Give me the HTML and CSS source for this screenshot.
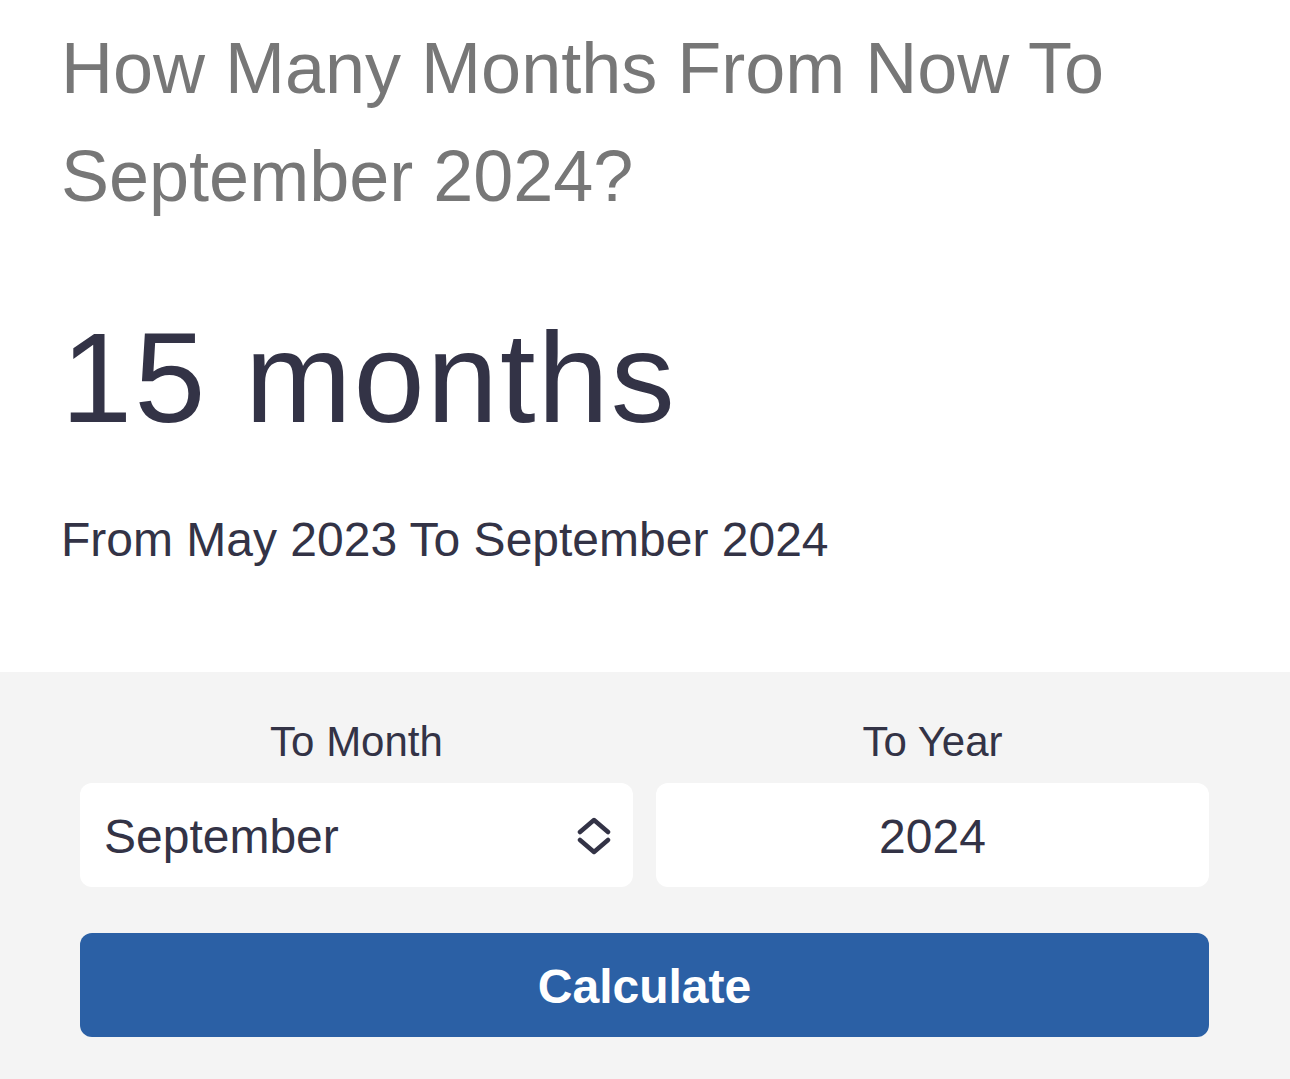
FILE: index.html
```
<!DOCTYPE html>
<html lang="en">
<head>
  <meta charset="UTF-8" />
  <meta name="viewport" content="width=device-width, initial-scale=1.0"/>
  <title>Months From Now To September 2024</title>
  <link rel="stylesheet" href="styles.css">
</head>
<body>
  <div class="result">
    <h1>How Many Months From Now To September 2024?</h1>
    <p class="answer">15 months</p>
    <p class="range">From May 2023 To September 2024</p>
  </div>

  <form class="calc" onsubmit="return false;">
    <div class="fields">
      <div class="field">
        <label for="toMonth">To Month</label>
        <div class="select-wrap">
          <select id="toMonth">
            <option>January</option>
            <option>February</option>
            <option>March</option>
            <option>April</option>
            <option>May</option>
            <option>June</option>
            <option>July</option>
            <option>August</option>
            <option selected>September</option>
            <option>October</option>
            <option>November</option>
            <option>December</option>
          </select>
          <svg class="chevrons" width="34" height="40" viewBox="0 0 34 40" fill="none" stroke="#333346" stroke-width="4.5" stroke-linecap="round" stroke-linejoin="round">
            <path d="M3 16 L17 4 L31 16"/>
            <path d="M3 24 L17 36 L31 24"/>
          </svg>
        </div>
      </div>
      <div class="field">
        <label for="toYear">To Year</label>
        <input id="toYear" type="text" value="2024">
      </div>
    </div>
    <button type="submit">Calculate</button>
  </form>
</body>
</html>
```

FILE: styles.css
```
* {
  margin: 0;
  padding: 0;
  box-sizing: border-box;
}

body {
  font-family: 'Liberation Sans', Arial, sans-serif;
  color: #333346;
  background: #fff;
}

.result {
  padding: 14px 56px 96px 61px;
}

h1 {
  font-size: 72px;
  font-weight: 400;
  line-height: 108px;
  color: #777;
}

.answer {
  margin-top: 71px;
  font-size: 128px;
  line-height: 1.2;
  letter-spacing: 2px;
}

.range {
  margin-top: 49px;
  font-size: 48px;
  line-height: 72px;
}

.calc {
  background: #f4f4f4;
  padding: 38px 81px 42px 80px;
}

.fields {
  display: grid;
  grid-template-columns: 1fr 1fr;
  gap: 23px;
}

.field label {
  display: block;
  text-align: center;
  font-size: 42px;
  line-height: 63px;
  margin-bottom: 10px;
}

.select-wrap {
  position: relative;
}

select,
input {
  display: block;
  width: 100%;
  height: 104px;
  border: none;
  border-radius: 12px;
  background: #fff;
  font-family: inherit;
  font-size: 48px;
  color: #333346;
  outline: none;
}

select {
  appearance: none;
  -webkit-appearance: none;
  padding: 4px 80px 0 24px;
}

input {
  text-align: center;
  padding: 4px 20px 0;
}

.chevrons {
  position: absolute;
  right: 22px;
  top: 33px;
  pointer-events: none;
}

button {
  display: block;
  width: 100%;
  height: 104px;
  margin-top: 46px;
  padding-top: 4px;
  border: none;
  border-radius: 12px;
  background: #2b60a5;
  color: #fff;
  font-family: inherit;
  font-size: 48px;
  font-weight: 700;
  cursor: pointer;
}
```
